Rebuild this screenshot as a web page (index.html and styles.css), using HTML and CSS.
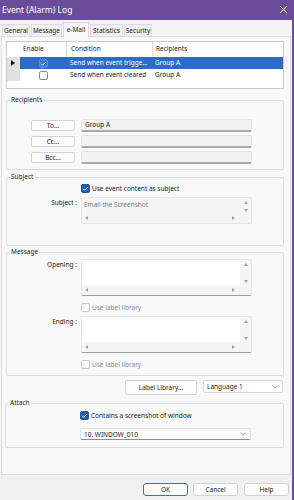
FILE: index.html
```html
<!DOCTYPE html>
<html lang="en">
<head>
<meta charset="UTF-8" />
<meta name="viewport" content="width=device-width, initial-scale=1" />
<title>Event (Alarm) Log</title>
<link rel="stylesheet" href="styles.css">
</head>
<body>

<div class="win">
  <div class="titlebar">
    <span>Event (Alarm) Log</span>
    <svg class="close" width="9" height="9" viewBox="0 0 9 9"><path d="M1 1L8 8M8 1L1 8" stroke="#fff" stroke-width="1"/></svg>
  </div>

  <div class="frame">
    <div class="tabs">
      <div class="tab w1">General</div>
      <div class="tab w2">Message</div>
      <div class="tab w3 active">e-Mail</div>
      <div class="tab w4">Statistics</div>
      <div class="tab w5">Security</div>
    </div>

    <div class="panel">
      <!-- conditions grid -->
      <div class="grid">
        <div class="grow head">
          <div></div>
          <div class="cell">Enable</div>
          <div class="cell sep">Condition</div>
          <div class="cell sep">Recipients</div>
        </div>
        <div class="grow sel">
          <div class="rh"><i class="ptr"></i></div>
          <div class="cell mid"><span class="gcb on"><svg width="9" height="9" viewBox="0 0 9 9"><path d="M2.2 4.7l1.6 1.6L6.9 3" stroke="#fff" fill="none" stroke-width="1"/></svg></span></div>
          <div class="cell">Send when event trigge...</div>
          <div class="cell">Group A</div>
        </div>
        <div class="grow">
          <div class="rh"></div>
          <div class="cell mid"><span class="gcb"></span></div>
          <div class="cell">Send when event cleared</div>
          <div class="cell">Group A</div>
        </div>
      </div>

      <fieldset class="group g-rec">
        <legend>Recipients</legend>
        <div class="rows">
          <div class="frow"><div class="lbl"><div class="btn small">To...</div></div><div class="field">Group A</div></div>
          <div class="frow"><div class="lbl"><div class="btn small">Cc...</div></div><div class="field"></div></div>
          <div class="frow"><div class="lbl"><div class="btn small">Bcc...</div></div><div class="field"></div></div>
        </div>
      </fieldset>

      <fieldset class="group g-subj">
        <legend>Subject</legend>
        <div class="chk first"><span class="cb on"><svg width="9" height="9" viewBox="0 0 9 9"><path d="M2.2 4.7l1.6 1.6L6.9 3" stroke="#fff" fill="none" stroke-width="1"/></svg></span>Use event content as subject</div>
        <div class="frow top memo-row">
          <div class="lbl txt">Subject :</div>
          <div class="memo dis">
            <div class="memo-main short"><div class="memo-text">Email the Screenshot</div><div class="vbar"><i class="up"></i><i class="dn"></i></div></div>
            <div class="hbar"><i class="lt"></i><i class="rt"></i></div>
          </div>
        </div>
      </fieldset>

      <fieldset class="group g-msg">
        <legend>Message</legend>
        <div class="frow top memo-row m1">
          <div class="lbl txt">Opening :</div>
          <div class="memo">
            <div class="memo-main"><div class="memo-text"></div><div class="vbar"><i class="up"></i><i class="dn"></i></div></div>
            <div class="hbar"><i class="lt"></i><i class="rt"></i></div>
          </div>
        </div>
        <div class="chk off"><span class="cb"></span>Use label library</div>
        <div class="frow top memo-row m2">
          <div class="lbl txt">Ending :</div>
          <div class="memo">
            <div class="memo-main"><div class="memo-text"></div><div class="vbar"><i class="up"></i><i class="dn"></i></div></div>
            <div class="hbar"><i class="lt"></i><i class="rt"></i></div>
          </div>
        </div>
        <div class="chk off last"><span class="cb"></span>Use label library</div>
      </fieldset>

      <div class="libbar">
        <div class="btn lib">Label Library...</div>
        <div class="select lang"><span>Language 1</span><svg width="6" height="4" viewBox="0 0 6 4"><path d="M0.5 0.8L3 3.2L5.5 0.8" stroke="#777" fill="none" stroke-width="0.8"/></svg></div>
      </div>

      <fieldset class="group g-att">
        <legend>Attach</legend>
        <div class="chk"><span class="cb on"><svg width="9" height="9" viewBox="0 0 9 9"><path d="M2.2 4.7l1.6 1.6L6.9 3" stroke="#fff" fill="none" stroke-width="1"/></svg></span>Contains a screenshot of window</div>
        <div class="select win-sel"><span>10. WINDOW_010</span><svg width="6" height="4" viewBox="0 0 6 4"><path d="M0.5 0.8L3 3.2L5.5 0.8" stroke="#777" fill="none" stroke-width="0.8"/></svg></div>
      </fieldset>
    </div>

    <div class="footer">
      <div class="btn foot ok">OK</div>
      <div class="btn foot">Cancel</div>
      <div class="btn foot help">Help</div>
    </div>
  </div>
</div>

</body>
</html>
```

FILE: styles.css
```css
* { box-sizing: border-box; }
body { margin: 0; font-family: "Noto Sans", "DejaVu Sans", sans-serif; font-size: 6.5px; color: #1c1c1c; background: #fff; }
.win { width: 294px; height: 500px; display: flex; flex-direction: column; }

.titlebar { height: 20px; flex: none; background: #6b4c9a; color: #fff; font-size: 8.5px; display: flex; align-items: center; justify-content: space-between; padding: 0 6px 1px 2px; }

.frame { flex: 1; display: flex; flex-direction: column; background: #f6f6f6; border-right: 2px solid #6b4c9a; }

.tabs { height: 16px; flex: none; display: flex; align-items: flex-end; padding-left: 2px; background: #f3f3f3; }
.tab { height: 12px; line-height: 11px; text-align: center; margin-right: 1px; border: 1px solid #dcdcdc; border-bottom: none; background: #f0f0f0; white-space: nowrap; }
.tab.active { height: 15px; line-height: 13px; background: #f9f9f9; margin-bottom: -1px; position: relative; z-index: 1; }
.w1 { width: 28px; } .w2 { width: 31px; } .w3 { width: 26px; } .w4 { width: 33px; } .w5 { width: 28px; }

.panel { height: 439px; flex: none; margin: 0 1px; border: 1px solid #dcdcdc; background: #f9f9f9; padding: 4px 6px 0 4px; }

/* grid */
.grid { height: 48px; border: 1px solid #cbcbcb; background: #fff; }
.grow { display: grid; grid-template-columns: 13px 46px 86px 1fr; height: 12px; }
.grow.head { height: 15px; }
.grow .cell { padding-left: 3px; line-height: 12px; white-space: nowrap; overflow: hidden; }
.grow.head .cell { line-height: 14px; }
.grow .sep { border-left: 1px solid #dedede; }
.grow.head .cell:first-of-type { padding-left: 2px; }
.rh { background: #e1e1e1; display: flex; align-items: center; padding-left: 4px; }
.ptr { border-left: 4px solid #111; border-top: 3px solid transparent; border-bottom: 3px solid transparent; }
.grow.sel .cell { background: #2c6cc4; color: #fff; }
.grow .cell.mid { display: flex; align-items: center; justify-content: center; padding-left: 0; }
.grow .cell:nth-child(3) { padding-left: 4px; }
.gcb { width: 9px; height: 9px; border: 1px solid #8a8a8a; border-radius: 2px; background: #fff; display: flex; }
.gcb.on { border-color: #5a8fd6; background: #3b7bcf; }
.gcb svg { margin: -1px; }

/* group boxes */
.group { margin: 6px 0 0 0; padding: 0; border: 1px solid #dddddd; border-radius: 2px; min-width: 0; }
.group legend { padding: 0 1px; margin-left: 3px; line-height: 10px; }
.g-subj { margin-top: 2px; padding-bottom: 21px; }
.g-msg { margin-top: 1px; padding-bottom: 6px; }
.g-att { margin: 3px 0 0 -1px; padding-bottom: 7px; }

.rows { padding: 14px 0 5px; display: flex; flex-direction: column; gap: 3px; }
.frow { display: flex; align-items: center; height: 13px; }
.frow.top { align-items: flex-start; height: auto; }
.lbl { width: 74px; flex: none; display: flex; justify-content: flex-end; padding-right: 6px; }
.lbl.txt { padding-right: 4px; line-height: 12px; }

.btn { background: #fdfdfd; border: 1px solid #d2d2d2; border-radius: 2px; text-align: center; }
.btn.small { width: 44px; height: 11px; line-height: 9px; }
.field { width: 171px; height: 13px; background: #f2f2f2; border: 1px solid #e4e4e4; border-bottom: 2px solid #a8a8a8; border-radius: 2px; padding-left: 3px; line-height: 10px; }

.chk { display: flex; align-items: center; gap: 2px; height: 10px; margin-left: 74px; }
.chk.first { margin-top: 1px; }
.g-att .chk { margin-left: 74px; margin-top: 2px; }
.chk.off { color: #8c8c8c; margin-top: 6px; }
.cb { width: 9px; height: 9px; flex: none; border-radius: 2px; border: 1px solid #c8c8c8; background: #fbfbfb; display: flex; }
.cb.on { border-color: #1d5aab; background: #1f5eae; }
.cb svg { margin: -1px; }

.memo-row { margin-top: 4px; }
.memo { width: 171px; border: 1px solid #e6e6e6; border-radius: 2px; background: #f5f5f5; }
.memo:not(.dis) { border-bottom: 1px solid #9c9c9c; }
.memo-main { display: flex; height: 25px; }
.memo-main.short { height: 15px; }
.memo-text { flex: 1; background: #fff; padding: 2px 0 0 2px; }
.dis .memo-text { background: #f5f5f5; color: #7d7d7d; }
.vbar { width: 11px; display: flex; flex-direction: column; justify-content: space-between; align-items: center; padding: 3px 0 2px; }
.short .vbar { padding: 3px 0 1px; }
.hbar { height: 10px; display: flex; justify-content: space-between; align-items: center; padding: 0 16px 0 3px; }
.up { border-bottom: 3px solid #a3a3a3; border-left: 2.5px solid transparent; border-right: 2.5px solid transparent; }
.dn { border-top: 3px solid #a3a3a3; border-left: 2.5px solid transparent; border-right: 2.5px solid transparent; }
.lt { border-right: 3px solid #a3a3a3; border-top: 2.5px solid transparent; border-bottom: 2.5px solid transparent; }
.rt { border-left: 3px solid #a3a3a3; border-top: 2.5px solid transparent; border-bottom: 2.5px solid transparent; }
.m1 { margin-top: 2px; }
.m2 { margin-top: 4px; }

.libbar { display: flex; justify-content: flex-end; align-items: flex-start; gap: 6px; margin-top: 4px; padding-right: 1px; }
.btn.lib { width: 72px; height: 15px; line-height: 13px; }
.select { display: flex; justify-content: space-between; align-items: center; background: #fff; border: 1px solid #d6d6d6; border-radius: 2px; padding: 0 4px 0 3px; }
.select.lang { width: 80px; height: 13px; }
.select.win-sel { width: 171px; height: 12px; margin: 8px 0 0 74px; border-color: #e2e2e2; border-bottom-color: #8e8e8e; }

.footer { flex: 1; background: #f0f0f0; display: flex; justify-content: flex-end; gap: 5px; padding: 8px 3px 0 0; }
.btn.foot { width: 45px; height: 13px; line-height: 11px; border-radius: 3px; }
.btn.ok { border-color: #3a6fc2; }
.btn.help { margin-left: 1px; }
```
